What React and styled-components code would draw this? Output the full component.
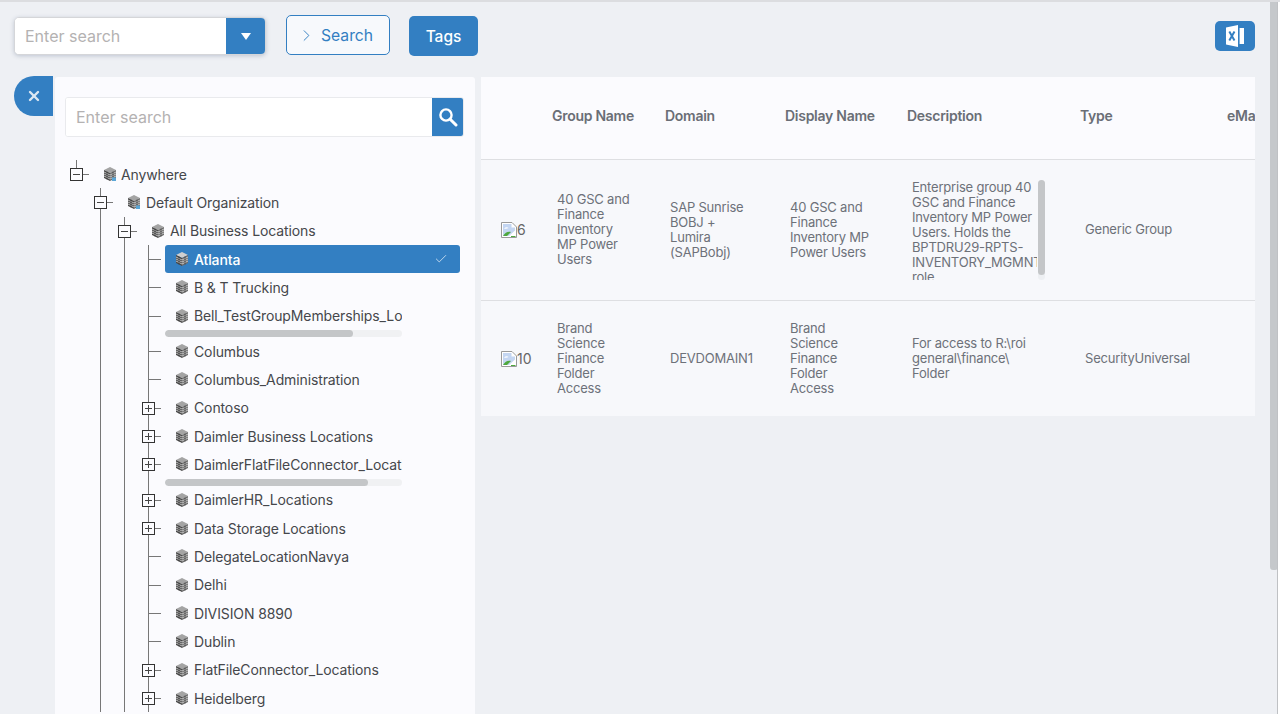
import React from "react";
import styled, { createGlobalStyle, css } from "styled-components";
import { Check, ChevronRight, X } from "lucide-react";

const BLUE = "#337fc2";
const FONT = `Inter, "Noto Sans", "Liberation Sans", sans-serif`;
const LINE = "#777";

const Global = createGlobalStyle`
  html, body { margin: 0; padding: 0; height: 714px; overflow: hidden; background: #eef0f4; }
  * { box-sizing: border-box; }
  body { font-family: ${FONT}; }
`;

const Page = styled.div`
  display: flex;
  height: 714px;
  border-top: 2px solid #dcdde0;
  background: #eef0f4;
  overflow: hidden;
`;
const Main = styled.div`
  flex: 0 0 1270px;
  display: flex;
  flex-direction: column;
  overflow: hidden;
`;
const PageScroll = styled.div`
  flex: 0 0 8px;
  height: 568px;
  background: #c5c8cb;
  border-radius: 0 0 3px 3px;
`;
const PageEdge = styled.div`
  flex: 0 0 1px;
  margin-left: -1px;
  background: #bfc1c4;
`;
const PageWhite = styled.div`
  flex: 1;
  background: #fff;
`;

const Toolbar = styled.div`
  flex: 0 0 74px;
  display: flex;
  align-items: flex-start;
  padding: 13px 15px 0 14px;
`;
const Combo = styled.div`
  display: flex;
  width: 252px;
  height: 38px;
  margin-top: 2px;
  border: 1px solid #d5d6d9;
  border-radius: 5px;
  overflow: hidden;
  background: #fff;
  box-shadow: 0 1px 4px rgba(80, 100, 130, 0.3);
`;
const SearchInput = styled.input`
  flex: 1;
  min-width: 0;
  border: 0;
  outline: 0;
  padding: 0 10px;
  font: 400 16px ${FONT};
  background: #fff;
  &::placeholder { color: #b4b2b2; opacity: 1; }
`;
const ComboArrow = styled.div`
  flex: 0 0 40px;
  margin: -1px -1px -1px 0;
  background: ${BLUE};
  display: flex;
  align-items: center;
  justify-content: center;
  &::after {
    content: "";
    border-left: 5.5px solid transparent;
    border-right: 5.5px solid transparent;
    border-top: 7px solid #fff;
  }
`;
const OutlineButton = styled.button`
  display: flex;
  align-items: center;
  width: 104px;
  height: 40px;
  margin-left: 20px;
  padding: 0 0 0 10px;
  gap: 5px;
  border: 1px solid ${BLUE};
  border-radius: 5px;
  background: #f7f9fc;
  color: ${BLUE};
  font: 400 15.7px ${FONT};
`;
const SolidButton = styled.button`
  width: 69px;
  height: 40px;
  margin: 1px 0 0 19px;
  border: 0;
  border-radius: 5px;
  background: ${BLUE};
  color: #fff;
  font: 500 15.5px ${FONT};
`;
const ExcelButton = styled.button`
  margin: 6px 0 0 auto;
  width: 40px;
  height: 30px;
  border: 0;
  padding: 0;
  border-radius: 5px;
  background: ${BLUE};
  display: flex;
  align-items: center;
  justify-content: center;
`;

const Body = styled.div`
  flex: 1;
  display: flex;
  align-items: flex-start;
  padding-left: 14px;
  min-height: 0;
`;
const CloseTab = styled.div`
  flex: 0 0 39px;
  height: 40px;
  border-radius: 20px 0 0 20px;
  background: ${BLUE};
  color: #dce8f3;
  display: flex;
  align-items: center;
  justify-content: center;
`;
const TreePanel = styled.div`
  flex: 0 0 420px;
  height: 640px;
  margin: 1px 0 0 2px;
  background: #fbfbfe;
  border-radius: 3px 3px 0 0;
  padding: 20px 0 0 10px;
  overflow: hidden;
`;
const TreeSearch = styled.div`
  display: flex;
  width: 399px;
  height: 40px;
  border: 1px solid #e9eaed;
  border-radius: 3px;
  background: #fff;
  overflow: hidden;
`;
const TreeSearchBtn = styled.div`
  flex: 0 0 32px;
  margin: -1px -1px -1px 0;
  background: ${BLUE};
  display: flex;
  align-items: center;
  justify-content: center;
`;
const Tree = styled.div`
  display: flex;
  flex-direction: column;
  margin: 23px 0 0 -1px;
`;
const Row = styled.div`
  display: flex;
  align-items: stretch;
`;

const vertical = `linear-gradient(${LINE},${LINE}) 12px 0 / 1px 100% no-repeat`;
const tick = `linear-gradient(${LINE},${LINE}) 12px 0 / 1px 8px no-repeat`;
const dash = `linear-gradient(${LINE},${LINE}) 19px 14px / 6px 1px no-repeat`;
const longDash = `linear-gradient(${LINE},${LINE}) 12px 14px / 13px 1px no-repeat`;
const cellBg = {
  blank: css``,
  pass: css`background: ${vertical};`,
  leaf: css`background: ${longDash}, ${vertical};`,
  box: css`background: ${dash}, ${vertical};`,
  root: css`background: ${dash}, ${tick};`,
};
const Cell = styled.div`
  flex: 0 0 25px;
  margin-right: -1px;
  display: flex;
  justify-content: flex-start;
  align-items: flex-start;
  padding: 8px 0 0 6px;
  ${(p) => cellBg[p.$mode]}
`;
const Expander = styled.div`
  width: 13px;
  height: 13px;
  border: 1px solid #333;
  background: #fbfbfe;
  display: flex;
  align-items: center;
  justify-content: center;
  position: relative;
  &::before {
    content: "";
    width: 7px;
    height: 1px;
    background: #444;
  }
  ${(p) =>
    p.$plus &&
    css`
      &::after {
        content: "";
        position: absolute;
        width: 1px;
        height: 7px;
        background: #444;
      }
    `}
`;
const Node = styled.div`
  margin-left: 5px;
  width: ${(p) => (p.$clip ? "237px" : "295px")};
  display: flex;
  flex-direction: column;
  overflow: hidden;
`;
const Label = styled.div`
  height: 28.33px;
  display: flex;
  align-items: center;
  gap: ${(p) => (p.$tight ? 5 : 6)}px;
  padding: 0 12px 0 11px;
  font: 400 14px ${FONT};
  letter-spacing: -0.12px;
  white-space: nowrap;
  color: ${(p) => (p.$active ? "#fff" : "#45474b")};
  border-radius: 3px;
  ${(p) => p.$active && css`background: ${BLUE}; font-weight: 500;`}
  ${(p) => p.$clip && css`padding-right: 0;`}
`;
const LabelText = styled.span`
  flex: 1;
  min-width: 0;
  overflow: hidden;
`;
const MiniTrack = styled.div`
  height: 7px;
  border-radius: 4px;
  background: #f0f1f3;
  overflow: hidden;
`;
const MiniThumb = styled.div`
  height: 100%;
  border-radius: 4px;
  background: #c4c6c8;
`;

const TablePanel = styled.div`
  flex: 0 0 774px;
  margin: 1px 0 0 6px;
  overflow: hidden;
`;
const grid = css`
  display: grid;
  grid-template-columns: 66px 113px 120px 122px 173px 147px 120px;
  width: 861px;
`;
const HeadRow = styled.div`
  ${grid}
  height: 83px;
  align-items: center;
  padding-bottom: 6px;
  background: #fbfbfe;
  border-bottom: 1px solid #dedfe2;
`;
const HeadCell = styled.div`
  padding-left: 5px;
  font: 600 14px ${FONT};
  letter-spacing: -0.27px;
  color: #6a6e76;
`;
const DataRow = styled.div`
  ${grid}
  height: ${(p) => p.$h}px;
  align-items: center;
  background: #f7f8fb;
  ${(p) => p.$line && "border-bottom: 1px solid #dedfe2; padding-bottom: 1px;"}
`;
const DataCell = styled.div`
  padding: 0 ${(p) => p.$pr || 10}px 0 10px;
  font: 400 13px/15px ${FONT};
  letter-spacing: -0.2px;
  color: #6d7179;
`;
const ImageCell = styled.div`
  padding-left: 20px;
  display: flex;
  align-items: center;
  font: 400 14px ${FONT};
  color: #666;
`;
const DescBox = styled.div`
  width: 133px;
  height: 100px;
  display: flex;
  gap: 1px;
`;
const DescText = styled.div`
  flex: 1;
  overflow: hidden;
  word-break: normal;
`;
const DescTrack = styled.div`
  flex: 0 0 7px;
  border-radius: 4px;
  background: #eef0f3;
`;
const DescThumb = styled.div`
  height: 95px;
  border-radius: 4px;
  background: #c4c6c8;
`;

const BuildingIcon = ({ light, badge }) => (
  <svg width="12" height="14" viewBox="0 0 12 14" style={{ flex: "0 0 12px" }}>
    <path d="M0 3 6 0l6 3-6 3z" fill={light ? "#cfcfcf" : "#a4a4a4"} />
    <path d="M0 3 6 6v8L0 11z" fill="#484848" />
    <path d="M12 3 6 6v8l6-3z" fill="#6c6c6c" />
    <path d="M0 5l6 3M0 7l6 3M0 9l6 3M12 5 6 8M12 7 6 10M12 9l-6 3" stroke="#dcdcdc" strokeWidth="0.8" fill="none" />
    <path d="M3 4.5v8M9 4.5v8" stroke="#3c3c3c" strokeWidth="0.7" fill="none" />
    {badge && <path d="M8 10.4h4V14H8z" fill="#5aa6d6" />}
  </svg>
);

const SearchGlyph = () => (
  <svg width="20" height="20" viewBox="0 0 20 20" fill="none" stroke="#fff">
    <circle cx="8" cy="8" r="5.6" strokeWidth="2.4" />
    <path d="M12.2 12.2 18 18" strokeWidth="3" strokeLinecap="round" />
  </svg>
);

const ExcelGlyph = () => (
  <svg width="20" height="24" viewBox="0 0 20 24">
    <path d="M1 3.4 13 1v22L1 20.6z" fill="#fff" />
    <path d="M14.6 4h4.4v16h-4.4z" fill="#fff" />
    <path d="M4.3 7.5 9.5 16.5M9.5 7.5 4.3 16.5" stroke={BLUE} strokeWidth="2" />
  </svg>
);

const BrokenImage = () => (
  <svg width="16" height="16" viewBox="0 0 16 16" style={{ flex: "0 0 16px" }}>
    <path d="M.5.5h10.5l4.5 4.5v10.5H.5z" fill="#fff" stroke="#9a9a9a" />
    <path d="M2 2h8.5v3.5H14v3L8 14H2z" fill="#c4d6f2" />
    <path d="M3 6.5c1.5-1.5 3.5-1.5 4.5-.5-1 .8-3 1-4.5.5z" fill="#fff" />
    <path d="M2 14c2-3.5 5-5 8-4l-4 4z" fill="#4ea83e" />
    <path d="M10 15 15 10v5z" fill="#fff" />
    <path d="M10 14.5h4.5" stroke="#4ea83e" />
  </svg>
);

const nodes = [
  { label: "Anywhere", cells: ["root"], exp: "minus", badge: true, tight: true },
  { label: "Default Organization", cells: ["blank", "box"], exp: "minus", badge: true },
  { label: "All Business Locations", cells: ["blank", "pass", "box"], exp: "minus" },
  { label: "Atlanta", active: true },
  { label: "B & T Trucking" },
  { label: "Bell_TestGroupMemberships_Locations", thumb: 188 },
  { label: "Columbus" },
  { label: "Columbus_Administration" },
  { label: "Contoso", exp: "plus" },
  { label: "Daimler Business Locations", exp: "plus" },
  { label: "DaimlerFlatFileConnector_Locations", exp: "plus", thumb: 203 },
  { label: "DaimlerHR_Locations", exp: "plus" },
  { label: "Data Storage Locations", exp: "plus" },
  { label: "DelegateLocationNavya" },
  { label: "Delhi" },
  { label: "DIVISION 8890" },
  { label: "Dublin" },
  { label: "FlatFileConnector_Locations", exp: "plus" },
  { label: "Heidelberg", exp: "plus" },
];

const TreeRow = ({ node }) => {
  const cells = node.cells || ["blank", "pass", "pass", node.exp ? "box" : "leaf"];
  return (
    <Row>
      {cells.map((mode, i) => (
        <Cell key={i} $mode={mode}>
          {i === cells.length - 1 && node.exp && <Expander $plus={node.exp === "plus"} />}
        </Cell>
      ))}
      <Node $clip={!!node.thumb}>
        <Label $active={node.active} $clip={!!node.thumb} $tight={node.tight}>
          <BuildingIcon light={node.active} badge={node.badge} />
          <LabelText>{node.label}</LabelText>
          {node.active && <Check size={14} color="#cfe0f0" strokeWidth={1.5} />}
        </Label>
        {node.thumb && (
          <MiniTrack>
            <MiniThumb style={{ width: node.thumb }} />
          </MiniTrack>
        )}
      </Node>
    </Row>
  );
};

export default function App() {
  return (
    <>
      <Global />
      <Page>
        <Main>
          <Toolbar>
            <Combo>
              <SearchInput placeholder="Enter search" />
              <ComboArrow />
            </Combo>
            <OutlineButton>
              <ChevronRight size={19} strokeWidth={1.2} />
              Search
            </OutlineButton>
            <SolidButton>Tags</SolidButton>
            <ExcelButton>
              <ExcelGlyph />
            </ExcelButton>
          </Toolbar>
          <Body>
            <CloseTab>
              <X size={16} strokeWidth={3.6} />
            </CloseTab>
            <TreePanel>
              <TreeSearch>
                <SearchInput placeholder="Enter search" />
                <TreeSearchBtn>
                  <SearchGlyph />
                </TreeSearchBtn>
              </TreeSearch>
              <Tree>
                {nodes.map((n) => (
                  <TreeRow key={n.label} node={n} />
                ))}
              </Tree>
            </TreePanel>
            <TablePanel>
              <HeadRow>
                <div />
                <HeadCell>Group Name</HeadCell>
                <HeadCell>Domain</HeadCell>
                <HeadCell>Display Name</HeadCell>
                <HeadCell>Description</HeadCell>
                <HeadCell>Type</HeadCell>
                <HeadCell>eMail</HeadCell>
              </HeadRow>
              <DataRow $h={141} $line>
                <ImageCell>
                  <BrokenImage />6
                </ImageCell>
                <DataCell $pr={25}>40 GSC and Finance Inventory MP Power Users</DataCell>
                <DataCell $pr={25}>SAP Sunrise BOBJ + Lumira (SAPBobj)</DataCell>
                <DataCell $pr={25}>40 GSC and Finance Inventory MP Power Users</DataCell>
                <DataCell>
                  <DescBox>
                    <DescText>
                      Enterprise group 40 GSC and Finance Inventory MP Power Users. Holds the BPTDRU29-RPTS-INVENTORY_MGMNT role
                    </DescText>
                    <DescTrack>
                      <DescThumb />
                    </DescTrack>
                  </DescBox>
                </DataCell>
                <DataCell>Generic Group</DataCell>
                <DataCell />
              </DataRow>
              <DataRow $h={115}>
                <ImageCell>
                  <BrokenImage />10
                </ImageCell>
                <DataCell $pr={40}>Brand Science Finance Folder Access</DataCell>
                <DataCell>DEVDOMAIN1</DataCell>
                <DataCell $pr={40}>Brand Science Finance Folder Access</DataCell>
                <DataCell $pr={40}>For access to R:\roi general\finance\ Folder</DataCell>
                <DataCell>SecurityUniversal</DataCell>
                <DataCell />
              </DataRow>
            </TablePanel>
          </Body>
        </Main>
        <PageScroll />
        <PageEdge />
        <PageWhite />
      </Page>
    </>
  );
}
